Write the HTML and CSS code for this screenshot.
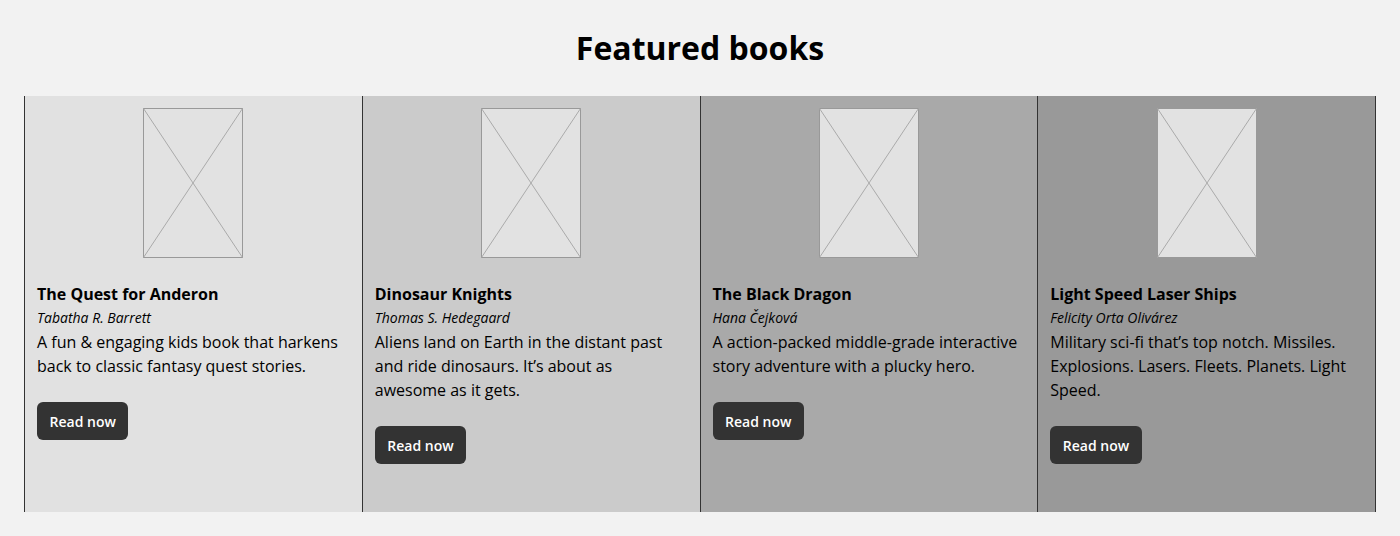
FILE: index.html
```html
<!DOCTYPE html>
<html lang="en">
<head>
<meta charset="utf-8">
<title>Featured books</title>
<link rel="stylesheet" href="styles.css">
</head>
<body>
<h1 class="page-title">Featured books</h1>
<div class="books">
  <article class="book book-1">
    <div class="cover"><svg viewBox="0 0 100 150" width="100" height="150"><rect x="0.5" y="0.5" width="99" height="149" fill="#e2e2e2" stroke="#999"/><path d="M0.5 0.5L99.5 149.5M99.5 0.5L0.5 149.5" stroke="#aaa" stroke-width="1" fill="none"/></svg></div>
    <h2 class="book-title">The Quest for Anderon</h2>
    <p class="book-author">Tabatha R. Barrett</p>
    <p class="book-desc">A fun &amp; engaging kids book that harkens back to classic fantasy quest stories.</p>
    <a class="btn" href="#">Read now</a>
  </article>
  <article class="book book-2">
    <div class="cover"><svg viewBox="0 0 100 150" width="100" height="150"><rect x="0.5" y="0.5" width="99" height="149" fill="#e2e2e2" stroke="#999"/><path d="M0.5 0.5L99.5 149.5M99.5 0.5L0.5 149.5" stroke="#aaa" stroke-width="1" fill="none"/></svg></div>
    <h2 class="book-title">Dinosaur Knights</h2>
    <p class="book-author">Thomas S. Hedegaard</p>
    <p class="book-desc">Aliens land on Earth in the distant past and ride dinosaurs. It’s about as awesome as it gets.</p>
    <a class="btn" href="#">Read now</a>
  </article>
  <article class="book book-3">
    <div class="cover"><svg viewBox="0 0 100 150" width="100" height="150"><rect x="0.5" y="0.5" width="99" height="149" fill="#e2e2e2" stroke="#999"/><path d="M0.5 0.5L99.5 149.5M99.5 0.5L0.5 149.5" stroke="#aaa" stroke-width="1" fill="none"/></svg></div>
    <h2 class="book-title">The Black Dragon</h2>
    <p class="book-author">Hana Čejková</p>
    <p class="book-desc">A action-packed middle-grade interactive story adventure with a plucky hero.</p>
    <a class="btn" href="#">Read now</a>
  </article>
  <article class="book book-4">
    <div class="cover"><svg viewBox="0 0 100 150" width="100" height="150"><rect x="0.5" y="0.5" width="99" height="149" fill="#e2e2e2" stroke="#999"/><path d="M0.5 0.5L99.5 149.5M99.5 0.5L0.5 149.5" stroke="#aaa" stroke-width="1" fill="none"/></svg></div>
    <h2 class="book-title">Light Speed Laser Ships</h2>
    <p class="book-author">Felicity Orta Olivárez</p>
    <p class="book-desc">Military sci-fi that’s top notch. Missiles. Explosions. Lasers. Fleets. Planets. Light Speed.</p>
    <a class="btn" href="#">Read now</a>
  </article>
</div>
</body>
</html>
```
FILE: styles.css
```css
* { box-sizing: border-box; }
html, body { margin: 0; }
body {
  background: #f2f2f2;
  padding: 24px;
  font-family: "Open Sans", "Liberation Sans", sans-serif;
  color: #000;
}
.page-title {
  margin: 0 0 24px;
  font-size: 32px;
  line-height: 48px;
  font-weight: 700;
  text-align: center;
}
.books {
  display: grid;
  grid-template-columns: repeat(4, 1fr);
  height: 416px;
  border-left: 1px solid #333;
}
.book {
  border-right: 1px solid #333;
  padding: 12px 16px 48px 12px;
  display: flex;
  flex-direction: column;
  align-items: flex-start;
}
.book-1 { background: #e1e1e1; }
.book-2 { background: #cbcbcb; }
.book-3 { background: #a9a9a9; }
.book-4 { background: #999999; }
.cover {
  align-self: center;
  width: 100px;
  height: 150px;
  margin: 0 -2px 24px 2px;
}
.cover svg { display: block; }
.book-title {
  margin: 0;
  font-size: 16px;
  line-height: 24px;
  font-weight: 700;
}
.book-author {
  margin: 0;
  font-size: 14px;
  line-height: 24px;
  font-style: italic;
}
.book-desc {
  margin: 0 0 24px;
  font-size: 16px;
  line-height: 24px;
}
.btn {
  display: inline-block;
  background: #333;
  color: #fff;
  text-decoration: none;
  font-size: 14px;
  font-weight: 600;
  line-height: 18px;
  padding: 11px 12.5px 9px;
  border-radius: 6px;
}
```
